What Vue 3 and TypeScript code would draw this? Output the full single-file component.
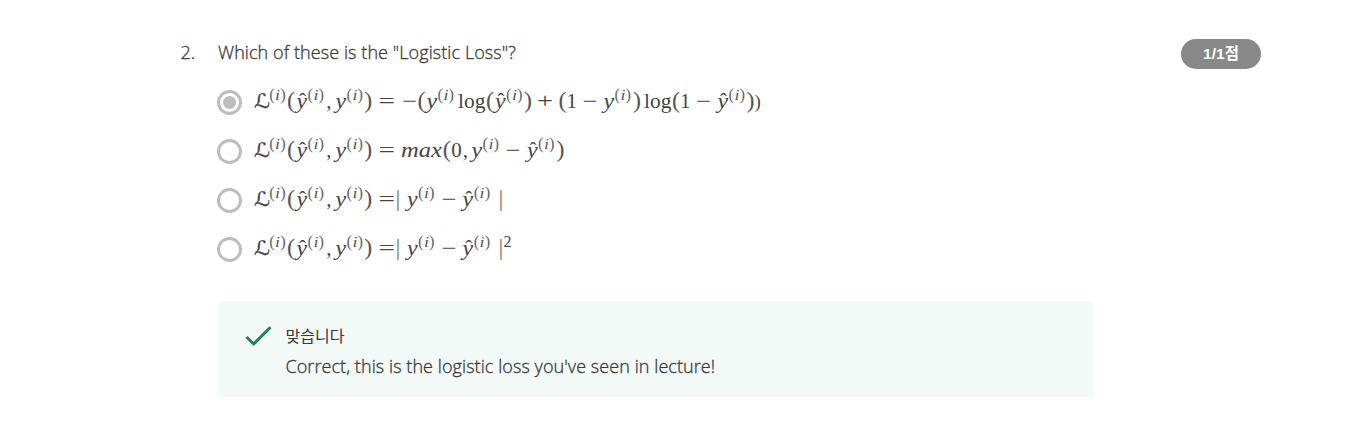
<script setup lang="ts">
type Kind = 'main' | 'var' | 'script' | 'paren' | 'sup' | 'supparen' | 'supvar' | 'hat' | 'op' | 'bar' | 'small'

interface Glyph {
  text: string
  x: number
  kind: Kind
  width?: number
}

interface Choice {
  label: string
  selected: boolean
  glyphs: Glyph[]
}

const rise: Record<Kind, number> = {
  main: 24, var: 24, script: 24, paren: 24, sup: 16, supparen: 15.5, supvar: 15.5, hat: 23.5, op: 24, bar: 24, small: 24,
}

const g = (kind: Kind, text: string, x: number, width?: number): Glyph => ({ kind, text, x, width })

const superscript = (x: number): Glyph[] => [
  g('supparen', '(', x, 5.5),
  g('supvar', 'i', x + 5.8, 5),
  g('supparen', ')', x + 11, 5.5),
]

const y = (x: number): Glyph[] => [g('var', 'y', x + 0.4, 10.6), ...superscript(x + 11.6)]
const yHat = (x: number): Glyph[] => [...y(x), g('hat', 'ˆ', x + 3)]

const lhs: Glyph[] = [
  g('script', 'ℒ', -1, 16),
  ...superscript(14.2),
  g('paren', '(', 32),
  ...yHat(41),
  g('main', ',', 71.3),
  ...y(80),
  g('paren', ')', 109.3),
  g('op', '=', 123.5, 16.5),
]

const choices: Choice[] = [
  {
    label: 'Cross entropy',
    selected: true,
    glyphs: [
      ...lhs,
      g('op', '−', 147, 15),
      g('paren', '(', 162.4),
      ...y(171),
      g('main', 'log', 203, 27.4),
      g('paren', '(', 231),
      ...yHat(239.5),
      g('paren', ')', 269),
      g('op', '+', 282, 16),
      g('paren', '(', 303.4),
      g('main', '1', 311.5),
      g('op', '−', 327.5, 15),
      ...y(348),
      g('paren', ')', 378),
      g('main', 'log', 389, 27.4),
      g('paren', '(', 417),
      g('main', '1', 425),
      g('op', '−', 441, 15),
      ...yHat(462),
      g('paren', ')', 491.5),
      g('small', ')', 499.8),
    ],
  },
  {
    label: 'Maximum difference',
    selected: false,
    glyphs: [
      ...lhs,
      g('var', 'max', 146, 41),
      g('paren', '(', 187.8),
      g('main', '0', 196.2),
      g('main', ',', 207.8),
      ...y(216),
      g('op', '−', 250.5, 15),
      ...yHat(271.5),
      g('paren', ')', 301.5),
    ],
  },
  {
    label: 'Absolute difference',
    selected: false,
    glyphs: [...lhs, g('bar', '|', 140.5), ...y(151.5), g('op', '−', 186.5, 15), ...yHat(207.2), g('bar', '|', 243.5)],
  },
  {
    label: 'Squared difference',
    selected: false,
    glyphs: [
      ...lhs, g('bar', '|', 140.5), ...y(151.5), g('op', '−', 186.5, 15), ...yHat(207.2), g('bar', '|', 243.5),
      g('sup', '2', 248.5, 8),
    ],
  },
]
</script>

<template>
  <main class="question">
    <div class="number">2.</div>
    <section class="content">
      <h2 class="prompt">Which of these is the "Logistic Loss"?</h2>
      <div class="choices" role="radiogroup">
        <div
          v-for="choice in choices"
          :key="choice.label"
          class="choice"
          role="radio"
          :aria-checked="choice.selected"
        >
          <span class="radio"><span v-if="choice.selected" class="dot"></span></span>
          <svg class="formula" width="520" height="36" viewBox="0 0 520 36">
            <text
              v-for="(item, i) in choice.glyphs"
              :key="i"
              :class="item.kind"
              :x="item.x"
              :y="rise[item.kind]"
              :textLength="item.width"
              lengthAdjust="spacingAndGlyphs"
            >{{ item.text }}</text>
          </svg>
        </div>
      </div>
      <div class="feedback">
        <svg class="check" width="28" height="22" viewBox="0 0 28 22">
          <path d="M1.5 12 L8.7 19 L25.5 2.3" />
        </svg>
        <div>
          <div class="verdict">맞습니다</div>
          <div class="explanation">Correct, this is the logistic loss you've seen in lecture!</div>
        </div>
      </div>
    </section>
    <div class="score">1/1점</div>
  </main>
</template>

<style>
body {
  margin: 0;
  background: #fff;
}
</style>

<style scoped>
.question {
  display: flex;
  align-items: flex-start;
  box-sizing: border-box;
  width: 1370px;
  height: 424px;
  padding: 39px 0 0 180px;
  color: #373737;
  font-family: "Open Sans", "Noto Sans CJK KR", sans-serif;
  font-size: 18px;
  font-weight: 300;
}
.number,
.prompt,
.explanation {
  -webkit-text-stroke: 0.3px #373737;
}
.number {
  width: 38px;
  padding-left: 0.5px;
  box-sizing: border-box;
  line-height: 27px;
}
.content {
  width: 875px;
}
.prompt {
  margin: 0;
  font-size: 18px;
  font-weight: 300;
  letter-spacing: 0.08px;
  line-height: 27px;
  white-space: nowrap;
}
.choices {
  padding-top: 11.5px;
}
.choice {
  display: flex;
  align-items: center;
  height: 49px;
  margin-left: -1px;
}
.radio {
  display: flex;
  align-items: center;
  justify-content: center;
  box-sizing: border-box;
  width: 25px;
  height: 25px;
  border: 3px solid #bdbdbd;
  border-radius: 50%;
}
.dot {
  width: 13px;
  height: 13px;
  border-radius: 50%;
  background: #bdbdbd;
}
.formula {
  margin-left: 13px;
  overflow: visible;
  fill: #444;
  font-family: "Liberation Serif", "DejaVu Math TeX Gyre", "DejaVu Sans", serif;
  font-size: 21px;
  font-weight: 400;
}
.var {
  font-size: 22px;
  font-style: italic;
}
.script {
  font-family: "DejaVu Sans", "DejaVu Serif", serif;
  font-size: 20px;
  stroke: #444;
  stroke-width: 0.3px;
}
.paren,
.bar {
  font-size: 24px;
}
.paren {
  fill: #555;
}
.sup {
  font-size: 16px;
}
.supparen {
  fill: #666;
  font-size: 17px;
}
.supvar {
  fill: #555;
  font-size: 15.5px;
  font-style: italic;
}
.small {
  font-size: 18px;
}
.bar {
  fill: #777;
}
.feedback {
  display: flex;
  box-sizing: border-box;
  height: 96px;
  margin-top: 27.5px;
  padding: 20px 0 0 27px;
  background: #f3f9f7;
}
.check {
  margin: 4px 12.5px 0 0;
  fill: none;
  stroke: #1f8354;
  stroke-width: 3;
}
.verdict {
  font-size: 16px;
  font-weight: 400;
  line-height: 30px;
}
.explanation {
  letter-spacing: 0.07px;
  line-height: 30px;
  white-space: nowrap;
}
.score {
  width: 80px;
  height: 30px;
  margin-left: 88px;
  border-radius: 15px;
  background: #888;
  color: #fff;
  font-family: "Liberation Sans", "Noto Sans CJK KR", sans-serif;
  font-size: 15.5px;
  font-weight: 700;
  line-height: 30px;
  text-align: center;
}
</style>
